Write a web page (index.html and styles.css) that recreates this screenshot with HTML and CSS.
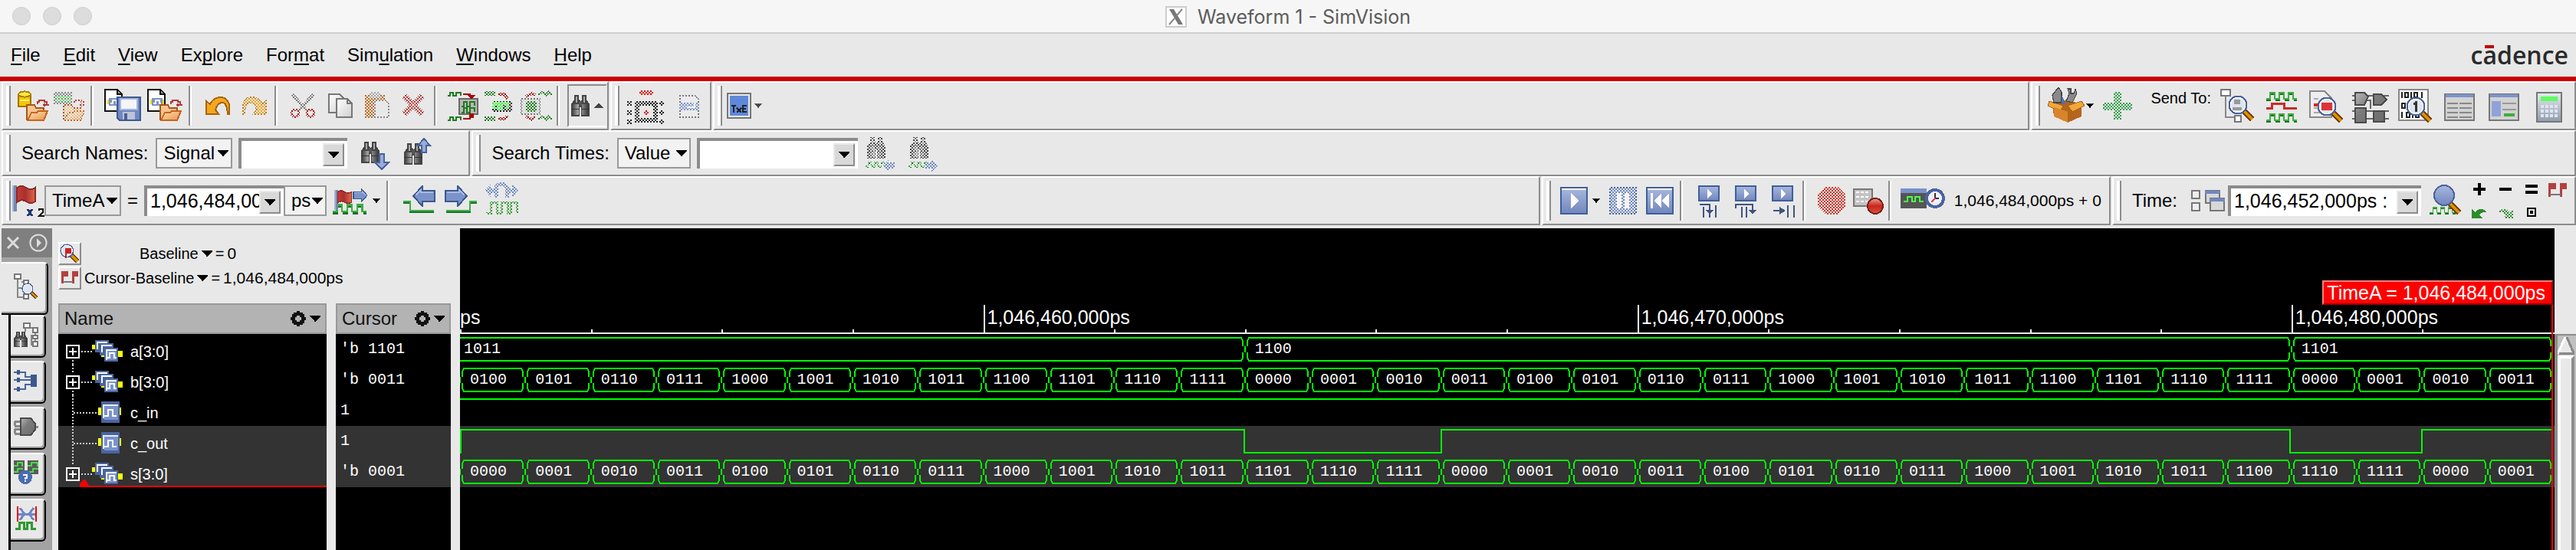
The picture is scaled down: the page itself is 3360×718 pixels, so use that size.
FILE: index.html
```html
<!DOCTYPE html>
<html lang="en">
<head>
<meta charset="utf-8">
<title>Waveform 1 - SimVision</title>
<link rel="stylesheet" href="styles.css">
</head>
<body>
<svg class="defs" aria-hidden="true">
  <defs>
    <linearGradient id="gb" x1="0" y1="0" x2="0" y2="1"><stop offset="0" stop-color="#a9b8de"/><stop offset="1" stop-color="#7186bd"/></linearGradient>
    <linearGradient id="gm" x1="0" y1="0" x2="1" y2="0"><stop offset="0" stop-color="#4a4a4a"/><stop offset=".4" stop-color="#b0b0b0"/><stop offset="1" stop-color="#3c3c3c"/></linearGradient>
    <linearGradient id="gg" x1="0" y1="0" x2="1" y2="1"><stop offset="0" stop-color="#b8b8b8"/><stop offset=".4" stop-color="#7c7c7c"/><stop offset="1" stop-color="#6a6a6a"/></linearGradient>
    <linearGradient id="gf" x1="0" y1="0" x2="1" y2="1"><stop offset="0" stop-color="#ffe3b8"/><stop offset="1" stop-color="#e8924a"/></linearGradient>
    <linearGradient id="gr" x1="0" y1="0" x2="0" y2="1"><stop offset="0" stop-color="#e8a08c"/><stop offset=".5" stop-color="#c8251c"/><stop offset="1" stop-color="#d8553c"/></linearGradient>
    <linearGradient id="gl" x1="0" y1="0" x2="1" y2="0"><stop offset="0" stop-color="#c93b33"/><stop offset=".45" stop-color="#a82f30"/><stop offset="1" stop-color="#e0694a"/></linearGradient>
    <linearGradient id="gp" x1="0" y1="0" x2="1" y2="1"><stop offset="0" stop-color="#fff"/><stop offset="1" stop-color="#cfcfcf"/></linearGradient>
    <linearGradient id="gc" x1="0" y1="0" x2="0" y2="1"><stop offset="0" stop-color="#e6eaf0"/><stop offset="1" stop-color="#8f9cae"/></linearGradient>

    <symbol id="folder" viewBox="0 0 15 12"><path d="M.5 11.500V1.500H5.500L6.500 3.500H11.500V6" fill="#f6c48c" stroke="#a8541c"/><path d="M1 11.500L3.500 6.500H7L8 5.500H14L11.500 11.500Z" fill="url(#gf)" stroke="#c8641e"/></symbol>
    <symbol id="redarrow" viewBox="0 0 8 5"><path d="M.5 3V1.500H1.500V.5H5V1.500H6.500V4M4 3.500H8M5 2.500V4.500" fill="none" stroke="#b13a3a"/></symbol>
    <symbol id="page" viewBox="0 0 13 16"><path d="M.5.5H8.500L11.500 3.500V14.500H.5Z" fill="#fff" stroke="#111"/><path d="M8.500 1V3.500H11" fill="#999" stroke="#111"/><rect x="2" y="7" width="9" height="3" fill="#f5e000"/><rect x="3" y="6" width="7" height="5" fill="#7d92c8"/><path d="M4 9.500H5.500V7.500H8V9.500H9" fill="none" stroke="#fff"/></symbol>
    <symbol id="lens" viewBox="0 0 18 18"><path d="M10.500 10.500L16 16" stroke="#7a3d10" stroke-width="4"/><path d="M10.500 10.500L16 16" stroke="#d89500" stroke-width="2"/><circle cx="6.500" cy="6.500" r="5.700" fill="#dfe4ee" stroke="#48639c"/><circle cx="6.500" cy="6.500" r="4.800" fill="none" stroke="#fff" stroke-width=".8"/></symbol>
    <symbol id="binoc" viewBox="0 0 12 14"><path d="M2 0H5V3L6 4V14H0V6L2 3ZM7 0H10V3L12 6V14H6V4L7 3Z" fill="#444"/><path d="M1 6H5V13H1ZM7 6H11V13H7Z" fill="url(#gm)"/><path d="M3 1H4V5H3ZM8 1H9V5H8Z" fill="#aaa"/><path d="M5 4H7V7H5Z" fill="#555"/><path d="M0 9H5M7 9H12" stroke="#333" stroke-width=".5"/><path d="M5.500 8H6.500V14H5.500Z" fill="#e8e8e8"/></symbol>
    <symbol id="flag" viewBox="0 0 16 17"><rect width="3" height="17" fill="#7488b4"/><rect width="1" height="17" fill="#a6b4d4"/><path d="M3 1.500Q6-.5 9 1.500T15 1.500V10.500Q12 12.500 9 10.500T3 11Z" fill="url(#gl)" stroke="#8c2a2a"/></symbol>
    <symbol id="left" viewBox="0 0 15 14"><path d="M.5 7L6.500 .5V3.500H14.500V10.500H6.500V13.500Z" fill="#7b93cb" stroke="#3d588e"/><path d="M2 6.500L5.500 3V4.500H13.500" fill="none" stroke="#a9bae4"/></symbol>
    <symbol id="one" viewBox="0 0 17 14"><rect x="1" y="4" width="15" height="5" fill="#ff0"/><rect x="3" y="0" width="12" height="14" fill="#4a659f"/><rect x="4" y="2" width="10" height="9" fill="#e8eefb"/><rect x="5" y="3" width="9" height="9" fill="#7b93cb"/><path d="M5 9.500H7.500V5.500H10.500V9.500H13" fill="none" stroke="#fff"/></symbol>
    <symbol id="bus" viewBox="0 0 20 14"><path d="M0 3H2V6H0ZM3 6H5V8H3ZM6 8H8V11H6ZM17 7H20V11H17Z" fill="#ff0"/><path d="M2 0H11V8H2Z" fill="#4a659f"/><path d="M3 1H10V2H4V6H3Z" fill="#fff"/><path d="M5 2H14V10H5Z" fill="#4a659f"/><path d="M6 3H13V4H7V8H6Z" fill="#fff"/><path d="M8 5H17V14H8Z" fill="#4a659f"/><path d="M9 6H16V13H9Z" fill="#fff"/><path d="M10 7H16V13H10Z" fill="#7b93cb"/><path d="M10 11.500H11.500V8.500H14.500V11.500H16" fill="none" stroke="#fff"/></symbol>
    <symbol id="wave" viewBox="0 0 20 6"><path d="M0 4.500H2.500V.5H5.500V4.500H8.500V.5H11.500V4.500H14.500V.5H17.500V4.500H20" fill="none" stroke="#3fae3f"/><path d="M0 5.500H3M6 5.500H9M12 5.500H15M18 5.500H20M3 1.500H5M9 1.500H11M15 1.500H17" stroke="#17702a"/></symbol>
    <symbol id="flags2" viewBox="0 0 12 10"><path d="M0 0H5V4H1.500V9H0ZM7 0H12V4H9V9H7.500V0Z" fill="#b34040"/><path d="M1 7.500H8" stroke="#777"/></symbol>
    <symbol id="gear" viewBox="0 0 10 10"><path d="M4 0H6V1H8V2H9V4H10V6H9V8H8V9H6V10H4V9H2V8H1V6H0V4H1V2H2V1H4ZM4 3V4H3V6H4V7H6V6H7V4H6V3Z" fill="#111" fill-rule="evenodd"/></symbol>
    <symbol id="down" viewBox="0 0 14 8"><path d="M0 0H14V1L8 7V8H6V7L0 1Z"/></symbol>
    <symbol id="playbox" viewBox="0 0 14 11"><rect x=".5" y=".5" width="13" height="9.500" fill="url(#gb)" stroke="#3f5f9a"/><path d="M6 2.500L9.500 5.500L6 8.500Z" fill="#fff"/></symbol>
    <symbol id="plusbox" viewBox="0 0 9 9"><rect x=".5" y=".5" width="8" height="8" fill="none" stroke="#fff"/><path d="M2 4.500H7M4.500 2V7" stroke="#fff"/></symbol>
  </defs>
</svg>

<header class="titlebar">
  <div class="lights"><i></i><i></i><i></i></div>
  <h1 class="title">
    <svg class="xlogo" viewBox="0 0 28 28"><rect x="1" y="1" width="26" height="26" fill="#fff" stroke="#ccc" stroke-width="2"/><path d="M5 4H11L23 24H17Z" fill="#777"/><path d="M22 4L15 12M12 16L5 24" stroke="#888" stroke-width="2"/></svg>
    Waveform 1 - SimVision
  </h1>
</header>

<nav class="menubar">
  <button><u>F</u>ile</button><button><u>E</u>dit</button><button><u>V</u>iew</button><button>Ex<u>p</u>lore</button><button>For<u>m</u>at</button><button>Sim<u>u</u>lation</button><button><u>W</u>indows</button><button><u>H</u>elp</button>
  <span class="brand">c<span class="macron">a</span>dence</span>
</nav>

<div class="row row-main">
  <div class="bar">
    <i class="grip"></i>
    <button class="tool" aria-label="Open database"><svg class="ic" viewBox="0 0 24 24"><path d="M2 4.500V12.500H10V4.500Z" fill="#f0c800" stroke="#a87000" stroke-width="1"/><ellipse cx="6" cy="4.500" rx="4" ry="1.800" fill="#ffe94a" stroke="#b08000"/><path d="M3 8.500H9" stroke="#fff27a"/><use href="#folder" x="7" y="10" width="15" height="12"/><use href="#redarrow" x="14" y="8" width="8" height="5"/></svg></button>
    <button class="tool off" aria-label="Reload database" disabled><svg class="ic" viewBox="0 0 24 24"><rect x="1" y="3" width="12" height="8" fill="#888"/><path d="M2 6.500H12M2 8.500H12" stroke="#4cff4c" stroke-width="1"/><use href="#folder" x="7" y="10" width="15" height="12"/><use href="#redarrow" x="14" y="8" width="8" height="5"/></svg></button>
    <i class="sep"></i>
    <button class="tool wide" aria-label="Save session"><svg class="ic w28" viewBox="0 0 28 24"><use href="#page" x="2" y="1" width="13" height="16"/><path d="M10.500 6.500H25.500V21.500H12L10.500 20Z" fill="#6f87c4" stroke="#3d588e"/><rect x="12.500" y="7.500" width="11" height="7" fill="#f4f6fb" stroke="#a9b6dc"/><rect x="14" y="16" width="8" height="5" fill="#bcc3d4"/><rect x="15" y="17" width="2" height="4" fill="#4a5f94"/></svg></button>
    <button class="tool wide" aria-label="Open session"><svg class="ic w28" viewBox="0 0 28 24"><use href="#page" x="2" y="1" width="13" height="16"/><use href="#folder" x="10" y="10" width="15" height="12"/><use href="#redarrow" x="17" y="8" width="8" height="5"/></svg></button>
    <i class="sep"></i>
    <button class="tool" aria-label="Undo"><svg class="ic" viewBox="0 0 24 24"><path d="M4.500 9V17.500H12.500L10.500 14.500Q12 10 15 10Q18 10 18.500 17.500H19.500V11Q18 6.500 14 6.500Q9 6.500 7 11Z" fill="#f3a71d" stroke="#a8640a"/></svg></button>
    <button class="tool off" aria-label="Redo" disabled><svg class="ic" viewBox="0 0 24 24"><path d="M19.500 9V17.500H11.500L13.500 14.500Q12 10 9 10Q6 10 5.500 17.500H4.500V11Q6 6.500 10 6.500Q15 6.500 17 11Z" fill="#f3a71d" stroke="#c07810"/></svg></button>
    <i class="sep"></i>
    <button class="tool off" aria-label="Cut" disabled><svg class="ic" viewBox="0 0 24 24"><path d="M4.500 4.500L14 15M18.500 4.500L9 15" fill="none" stroke="#777" stroke-width="2"/><circle cx="6.500" cy="17" r="2.300" fill="none" stroke="#b01818" stroke-width="1.500"/><circle cx="16.500" cy="17" r="2.300" fill="none" stroke="#b01818" stroke-width="1.500"/></svg></button>
    <button class="tool" aria-label="Copy"><svg class="ic" viewBox="0 0 24 24"><path d="M4.500 4.500H11.500L14.500 7.500V16.500H4.500Z" fill="url(#gp)" stroke="#777"/><path d="M9.500 7.500H16.500L19.500 10.500V19.500H9.500Z" fill="url(#gp)" stroke="#777"/><path d="M16.500 7.500V10.500H19.500" fill="none" stroke="#777"/></svg></button>
    <button class="tool off" aria-label="Paste" disabled><svg class="ic" viewBox="0 0 24 24"><rect x="4" y="5" width="13" height="15" fill="#c06a1c"/><rect x="7" y="3" width="7" height="4" fill="#aaa"/><path d="M10.500 8.500H17L19.500 11V19.500H10.500Z" fill="#e8e8e8" stroke="#888"/></svg></button>
    <button class="tool off" aria-label="Delete" disabled><svg class="ic" viewBox="0 0 24 24"><path d="M5.500 5.500L17.500 17.500M17.500 5.500L5.500 17.500" stroke="#a83232" stroke-width="4"/><path d="M5.500 5.500L17.500 17.500M17.500 5.500L5.500 17.500" stroke="#e07060" stroke-width="1"/></svg></button>
    <i class="sep"></i>
    <button class="tool" aria-label="Send waves in and out"><svg class="ic" viewBox="0 0 24 24"><path d="M2 5.500H3.500V3.500H5.500V5.500H7.500V3.500H10.500V5.500M2 21.500H3.500V19.500H5.500V21.500H7.500V19.500H10.500V21.500" fill="none" stroke="#1d7c1d"/><rect x="9.500" y="7.500" width="12" height="10" fill="#b8b8b8" stroke="#6a6a6a"/><path d="M11 12.500H12.500V9.500H14.500V12.500H16.500V9.500H19.500V12M11 16.500H12.500V13.500H14.500V16.500H16.500V13.500H19.500V16" fill="none" stroke="#1d7c1d"/><path d="M12 4.500H16.500V6M12 20.500H16.500V19" fill="none" stroke="#a80000"/><path d="M15 5H20L17.500 8ZM16 17H19V20H16Z" fill="#a80000"/></svg></button>
    <button class="tool off" aria-label="Add waves" disabled><svg class="ic" viewBox="0 0 24 24"><path d="M2 4H9M2 20.500H9" stroke="#1d7c1d" stroke-width="3"/><rect x="7" y="9" width="13" height="7" fill="#222"/><path d="M8 14V10.500H11V14H13V10.500H17V14" fill="none" stroke="#3cff3c" stroke-width="2"/><path d="M11 4.500H15L17 7.500M11 20.500H15L17 18.500" fill="none" stroke="#a80000" stroke-width="2"/></svg></button>
    <button class="tool off" aria-label="Extract waves" disabled><svg class="ic" viewBox="0 0 24 24"><rect x="2" y="7.500" width="12" height="10" fill="#d4d4d4" stroke="#777"/><path d="M5 9H12V16H5Z" fill="#1d7c1d"/><path d="M5 6L9 4L11 5M5 19L9 21L11 19" stroke="#a80000" stroke-width="2" fill="none"/><path d="M13 5L16 3L18 5L20 3L22 5M13 21L16 19L18 21L20 19L22 21" stroke="#1d7c1d" stroke-width="1.500" fill="none"/></svg></button>
    <i class="sep"></i>
    <button class="tool sunk" aria-label="Show search bar"><svg class="b-l" viewBox="0 0 12 14"><use href="#binoc" width="12" height="14"/></svg><svg class="tri up" viewBox="0 0 14 8"><use href="#down" width="14" height="8"/></svg></button>
  </div>
  <div class="bar roomy">
    <i class="grip"></i>
    <button class="tool wide off" aria-label="Breakpoint" disabled><svg class="ic w28" viewBox="0 0 28 24"><path d="M8 3.500H17" stroke="#e00000" stroke-width="3"/><rect x="6.500" y="10.500" width="12" height="11" fill="none" stroke="#222" stroke-width="3"/><path d="M0 10.500H3M0 16.500H3M0 22.500H3M21 10.500H24M21 16.500H24M21 22.500H24" stroke="#222" stroke-width="3"/><rect x="11" y="15" width="3" height="3" fill="#e00000"/></svg></button>
    <button class="tool off" aria-label="Page" disabled><svg class="ic" viewBox="0 0 24 24"><path d="M4.500 5.500H14L16.500 8V19.500H4.500Z" fill="#eee" stroke="#777"/><path d="M4 10H17V15H4Z" fill="#7b93cb"/><path d="M9 13H14V10" stroke="#fff" fill="none"/></svg></button>
  </div>
  <div class="bar grow">
    <i class="grip"></i>
    <button class="tool flat text" aria-label="Text editor"><svg class="txe" viewBox="0 0 16 17"><rect x=".5" y=".5" width="15" height="16" fill="#5f88da" stroke="#777"/><rect x="1.500" y="1.500" width="13" height="14" fill="none" stroke="#e8e8e8"/><path d="M3 8.500H6M4.500 8.500V13M6.500 10L9.500 13M9.500 10L6.500 13M13 8.500H10.500V12.500H13M10.500 10.500H12.500" fill="none" stroke="#222"/></svg><svg class="tri sm grey" viewBox="0 0 14 8"><use href="#down" width="14" height="8"/></svg></button>
  </div>
  <div class="bar send">
    <i class="grip"></i>
    <button class="tool flat box" aria-label="Toolbox"><svg class="ic" viewBox="0 0 24 24"><path d="M3 11L12 8L22 11V19L13 23L4 19Z" fill="#b5651b"/><path d="M1 9L10 12L8 16L0 12ZM22 9L13 12L16 16L24 12Z" fill="#f0a838" stroke="#a8641a" stroke-width=".5"/><path d="M4 10L3 5L7 0L9 3V10ZM12 9L14 4L13 1H15V4H17L18 1L19 4L16 10Z" fill="#8a8a8a" stroke="#444" stroke-width=".6"/><path d="M9 5L12 11H9Z" fill="#4f6fb0"/><path d="M4 13L13 16V23L4 19Z" fill="#d8852a"/></svg><svg class="tri sm" viewBox="0 0 14 8"><use href="#down" width="14" height="8"/></svg></button>
    <button class="tool off" aria-label="Add" disabled><svg class="ic" viewBox="0 0 24 24"><path d="M9 3H14V10H21V15H14V21H9V15H2V10H9Z" fill="#2f9e4a"/></svg></button>
    <span class="sendto">Send To:</span>
    <div class="sends">
      <button class="tool" aria-label="Design browser"><svg class="ic" viewBox="0 0 24 24"><path d="M4.500 4V19.500H10" fill="none" stroke="#888"/><rect x="1.500" y="1.500" width="6" height="4" fill="#fff" stroke="#777"/><rect x="10.500" y="18.500" width="4" height="4" fill="#fff" stroke="#777"/><use href="#lens" x="6" y="5" width="18" height="18"/><path d="M10 8H14V11H10ZM9 13H15V15H9Z" fill="#999"/></svg></button>
      <button class="tool" aria-label="Waveform"><svg class="ic" viewBox="0 0 24 24"><use href="#wave" x="2" y="3" width="20" height="6"/><path d="M2 13.500H5.500V10.500H13.500V13.500H22" fill="none" stroke="#cc2a2a" stroke-width="1.500"/><use href="#wave" x="2" y="17" width="20" height="6"/></svg></button>
      <button class="tool" aria-label="Source browser"><svg class="ic" viewBox="0 0 24 24"><path d="M1.500 2.500H11L15.500 7V19.500H1.500Z" fill="#eee" stroke="#888"/><path d="M4 7.500H7M4 13.500H7M4 16.500H12" stroke="#aaa"/><path d="M4 11.500H7" stroke="#d22" stroke-width="2"/><use href="#lens" x="6" y="6" width="18" height="18"/><rect x="9" y="10" width="7" height="5" fill="#d33"/></svg></button>
      <button class="tool" aria-label="Schematic"><svg class="ic" viewBox="0 0 24 24"><path d="M0 5.500H24M0 8.500H12M12 8V14M0 15.500H24M0 20.500H24" stroke="#666"/><path d="M2 3.500H8L10.500 6L8 11.500H2ZM14 4.500H19L22.500 8L19 11.500H14ZM2 13.500H9V23H2ZM14 15.500H21V22.500H14Z" fill="url(#gg)" stroke="#4a4a4a"/></svg></button>
      <button class="tool" aria-label="Memory viewer"><svg class="ic" viewBox="0 0 24 24"><rect x="1.500" y="1.500" width="19" height="20" fill="#fff" stroke="#888"/><path d="M3.500 3V7M5.500 3.500H7.500V6.500H5.500ZM9.500 3V7M11.500 3.500H13.500V6.500H11.500ZM16.500 3V7M3.500 10.500H5.500V13.500H3.500ZM3.500 16V20M6.500 16.500H8.500V19.500H6.500ZM10.500 16V20M12.500 16.500H14.500V19.500H12.500Z" stroke="#222" fill="none"/><use href="#lens" x="6" y="6" width="18" height="18"/><path d="M12.500 9V16M11 10.500H12.500" stroke="#333" stroke-width="1.500"/></svg></button>
      <button class="tool" aria-label="Register"><svg class="ic" viewBox="0 0 24 24"><rect x="2.500" y="4.500" width="19" height="17" fill="#d2d2d2" stroke="#777"/><path d="M3 5.500H21" stroke="#7b93cb" stroke-width="2"/><path d="M4 10.500H11M4 13.500H11M4 16.500H11M4 19.500H11M12 10.500H20M12 13.500H20M12 16.500H20M12 19.500H20" stroke="#888"/></svg></button>
      <button class="tool" aria-label="Properties"><svg class="ic" viewBox="0 0 24 24"><rect x="2.500" y="4.500" width="19" height="17" fill="#d2d2d2" stroke="#777"/><path d="M3 5.500H21" stroke="#7b93cb" stroke-width="2"/><rect x="4" y="9" width="6" height="10" fill="#8fa3d8"/><path d="M11 10.500H20M11 14.500H20" stroke="#999"/><path d="M12 18H19" stroke="#3fae3f" stroke-width="2"/></svg></button>
      <button class="tool" aria-label="Calculator"><svg class="ic" viewBox="0 0 24 24"><rect x="4.500" y="3.500" width="16" height="19" fill="url(#gc)" stroke="#777"/><rect x="7" y="6" width="11" height="3" fill="#5cff5c"/><path d="M7 12.500H18M7 15.500H18M7 18.500H18" stroke="#dfe5ee" stroke-width="2" stroke-dasharray="2 1"/></svg></button>
    </div>
  </div>
</div>

<div class="row row-search">
  <div class="bar">
    <i class="grip"></i>
    <label class="lab" for="sn">Search Names:</label>
    <select class="sel" aria-label="Name kind"><option>Signal</option></select>
    <div class="combo c-s"><input id="sn" type="text"><button aria-label="Open list"><svg class="tri" viewBox="0 0 14 8"><use href="#down" width="14" height="8"/></svg></button></div>
    <button class="tool wide" aria-label="Find next"><svg class="ic w28" viewBox="0 0 28 24"><use href="#binoc" x="4" y="4" width="12" height="15"/><path d="M16 12.500H19V18H22L17.500 22.500L13 18H16Z" fill="#9aacd8" stroke="#48639c"/></svg></button>
    <button class="tool wide last" aria-label="Find previous"><svg class="ic w28" viewBox="0 0 28 24"><use href="#binoc" x="4" y="5" width="12" height="15"/><path d="M15.500 11.500H18.500V7H21L17 2.500L13 7H15.500Z" fill="#9aacd8" stroke="#48639c"/></svg></button>
  </div>
  <div class="bar grow">
    <i class="grip"></i>
    <label class="lab" for="st">Search Times:</label>
    <select class="sel val" aria-label="Time kind"><option>Value</option></select>
    <div class="combo c-t"><input id="st" type="text"><button aria-label="Open list"><svg class="tri" viewBox="0 0 14 8"><use href="#down" width="14" height="8"/></svg></button></div>
    <button class="tool wide off" aria-label="Previous match" disabled><svg class="ic w28" viewBox="0 0 28 24"><use href="#binoc" x="4" y="1" width="12" height="15"/><use href="#wave" x="3" y="17" width="14" height="5"/><path d="M14 20L18 16V18H22V22H18V24Z" fill="#6f87c4"/></svg></button>
    <button class="tool wide off" aria-label="Next match" disabled><svg class="ic w28" viewBox="0 0 28 24"><use href="#binoc" x="4" y="1" width="12" height="15"/><use href="#wave" x="3" y="17" width="14" height="5"/><path d="M22 20L18 16V18H14V22H18V24Z" fill="#6f87c4"/></svg></button>
  </div>
</div>

<div class="row row-time">
  <div class="bar grow">
    <i class="grip tight"></i>
    <svg class="flagx" viewBox="0 0 21 24"><use href="#flag" x="0" y="2" width="16" height="17"/><path d="M10 17.500L13 22M13 17.500L10 22" stroke="#1f3a75" stroke-width="1.500"/><path d="M17.500 18.500V17.500H20V19.500L17.500 22H21" stroke="#111" fill="none"/></svg>
    <select class="sel" aria-label="Cursor"><option>TimeA</option></select>
    <label class="eq" for="ta">=</label>
    <div class="combo c-a"><input id="ta" type="text" value="1,046,484,000"><button aria-label="Open list"><svg class="tri" viewBox="0 0 14 8"><use href="#down" width="14" height="8"/></svg></button></div>
    <select class="sel ps" aria-label="Unit"><option>ps</option></select>
    <button class="tool flat" aria-label="Go to cursor"><svg class="ic" viewBox="0 0 24 24"><use href="#wave" x="1" y="14" width="22" height="7"/><use href="#flag" x="2" y="4" width="12" height="15"/><g transform="translate(24 4) scale(-1 1)"><use href="#left" x="0" y="0" width="10" height="9"/></g></svg><svg class="tri sm" viewBox="0 0 14 8"><use href="#down" width="14" height="8"/></svg></button>
    <i class="sep"></i>
    <button class="tool wide" aria-label="Previous edge"><svg class="ic w28" viewBox="0 0 28 24"><use href="#left" x="10" y="2" width="15" height="14"/><path d="M4 12.500H8.500V18.500H24" fill="none" stroke="#3fae3f"/><path d="M4 13.500H8M8 19.500H24" stroke="#17702a"/></svg></button>
    <button class="tool wide" aria-label="Next edge"><svg class="ic w28" viewBox="0 0 28 24"><g transform="translate(28 0) scale(-1 1)"><use href="#left" x="10" y="2" width="15" height="14"/><path d="M4 12.500H8.500V18.500H24" fill="none" stroke="#3fae3f"/><path d="M4 13.500H8M8 19.500H24" stroke="#17702a"/></g></svg></button>
    <button class="tool off" aria-label="Any edge" disabled><svg class="ic" viewBox="0 0 24 24"><path d="M1 5L5 1V4H8V7H5V10ZM23 5L19 1V4H16V7H19V10Z" fill="#6f87c4"/><path d="M8.500 10V3Q12-1 15.500 3V10" fill="none" stroke="#6f87c4" stroke-width="2.500"/><path d="M2 20H5V13H9V20H12V13H16V20H18V13H22V20" fill="none" stroke="#2d9a2d" stroke-width="1.500"/></svg></button>
  </div>
  <div class="bar">
    <i class="grip"></i>
    <button class="tool flat" aria-label="Run"><svg class="sq" viewBox="0 0 18 18"><rect x=".5" y=".5" width="17" height="17" fill="url(#gb)" stroke="#3f5f9a"/><path d="M1 1.500H17" stroke="#fff"/><path d="M7 4L12 9L7 14Z" fill="#fff"/></svg><svg class="tri sm" viewBox="0 0 14 8"><use href="#down" width="14" height="8"/></svg></button>
    <button class="tool off" aria-label="Stop" disabled><svg class="sq" viewBox="0 0 18 18"><rect x=".5" y=".5" width="17" height="17" fill="#6f87c4" stroke="#3f5f9a"/><path d="M6.500 4V14M11.500 4V14" stroke="#fff" stroke-width="3"/></svg></button>
    <button class="tool" aria-label="Rewind"><svg class="sq" viewBox="0 0 18 18"><rect x=".5" y=".5" width="17" height="17" fill="url(#gb)" stroke="#3f5f9a"/><path d="M1 1.500H17" stroke="#fff"/><path d="M3 4H4.500V14H3ZM10 4V14L5 9ZM15 4V14L10 9Z" fill="#fff"/></svg></button>
    <i class="sep"></i>
    <button class="tool" aria-label="Step into"><svg class="ic" viewBox="0 0 24 24"><use href="#playbox" x="4" y="2" width="16" height="11"/><path d="M6 14.500H12.500V18M16.500 15V23M8.500 16V23" fill="none" stroke="#3f5480"/><path d="M10 18H15L12.500 21Z" fill="#3f5480"/><path d="M12.500 20V23" stroke="#3f5480"/></svg></button>
    <button class="tool" aria-label="Step over"><svg class="ic" viewBox="0 0 24 24"><use href="#playbox" x="4" y="2" width="16" height="11"/><path d="M5.500 17V14.500H16.500V18M9.500 16V23M12.500 16V23" fill="none" stroke="#3f5480"/><path d="M14 18H19L16.500 21Z" fill="#3f5480"/></svg></button>
    <button class="tool" aria-label="Step out"><svg class="ic" viewBox="0 0 24 24"><use href="#playbox" x="4" y="2" width="16" height="11"/><path d="M6 18.500H11M15.500 15V23M19.500 15V23" fill="none" stroke="#3f5480"/><path d="M10 16V21L14 18.500Z" fill="#3f5480"/></svg></button>
    <i class="sep"></i>
    <button class="tool off" aria-label="Interrupt" disabled><svg class="sq" viewBox="0 0 18 18"><path d="M5 0H13L18 5V13L13 18H5L0 13V5Z" fill="#c8352a"/></svg></button>
    <button class="tool" aria-label="Record"><svg class="ic" viewBox="0 0 24 24"><rect x="2.500" y="4.500" width="12" height="11" fill="#c4c4c4" stroke="#777"/><path d="M5 6V15M8 6V15M11 6V15" stroke="#fff" stroke-dasharray="1 2" stroke-width="2"/><circle cx="16.500" cy="15.500" r="5" fill="url(#gr)" stroke="#7c1c16"/></svg></button>
    <i class="sep"></i>
    <svg class="clock" viewBox="0 0 30 24"><rect x="1" y="4" width="17" height="13" fill="#555"/><path d="M1 5.500H18" stroke="#7b93cb" stroke-width="3"/><path d="M3 12.500H5.500V9.500H8.500V12.500H10.500V9.500H13.500V12.500H16" fill="none" stroke="#4cff4c"/><circle cx="23.500" cy="10.500" r="5.500" fill="#eef" stroke="#4a659f" stroke-width="2"/><path d="M23.500 7V10.500H26" stroke="#333" fill="none"/><path d="M21 13L23.500 10.500" stroke="#d44"/></svg>
    <output class="num">1,046,484,000ps + 0</output>
  </div>
  <div class="bar">
    <i class="grip"></i>
    <label class="lab tm" for="tr">Time:</label>
    <svg class="ranges" viewBox="0 0 24 16"><rect x="2.500" y="1.500" width="5" height="5" fill="#eee" stroke="#777"/><rect x="2.500" y="9.500" width="5" height="5" fill="#eee" stroke="#777"/><rect x="11.500" y="1.500" width="9" height="8" fill="#d8d8d8" stroke="#777"/><path d="M11 2.500H21" stroke="#6f87c4" stroke-width="2"/><rect x="14.500" y="6.500" width="9" height="8" fill="#d8d8d8" stroke="#777"/><path d="M14 7.500H24" stroke="#6f87c4" stroke-width="2"/></svg>
    <div class="combo c-r"><input id="tr" type="text" value="1,046,452,000ps :"><button aria-label="Open list"><svg class="tri" viewBox="0 0 14 8"><use href="#down" width="14" height="8"/></svg></button></div>
    <button class="tool" aria-label="Zoom"><svg class="ic" viewBox="0 0 24 24"><use href="#wave" x="1" y="16" width="18" height="5"/><path d="M15 14L21 20" stroke="#7a3d10" stroke-width="4"/><path d="M15 14L21 20" stroke="#d89500" stroke-width="2"/><circle cx="11" cy="8.500" r="6.500" fill="url(#gb)" stroke="#48639c"/></svg></button>
    <div class="zoomgrid">
      <button aria-label="Zoom in"><svg viewBox="0 0 12 12"><path d="M2 6H10M6 2V10" stroke="#000" stroke-width="2"/></svg></button>
      <button aria-label="Zoom out"><svg viewBox="0 0 12 12"><path d="M2 6H10" stroke="#000" stroke-width="2"/></svg></button>
      <button aria-label="Zoom fit"><svg viewBox="0 0 12 12"><path d="M2 4H10M2 8H10" stroke="#000" stroke-width="2"/></svg></button>
      <button aria-label="Zoom cursors"><svg viewBox="0 0 12 12"><use href="#flags2" y="2" width="12" height="10"/></svg></button>
      <button aria-label="Previous view"><svg viewBox="0 0 12 12"><path d="M1 4L3 6Q7 2 11 6Q8 5 6 8L8 10H1Z" fill="#2b8c2b"/></svg></button>
      <button class="off" aria-label="Next view" disabled><svg viewBox="0 0 12 12"><path d="M11 4L9 6Q5 2 1 6Q4 5 6 8L5 10H11Z" fill="#2b8c2b"/></svg></button>
      <button aria-label="Centre view"><svg viewBox="0 0 12 12"><rect x="3.500" y="3.500" width="5" height="5" fill="none" stroke="#000"/><rect x="5" y="5" width="2" height="2"/></svg></button>
    </div>
  </div>
</div>

<main class="work">
  <aside class="side">
    <div class="side-head">
      <button aria-label="Close"><svg viewBox="0 0 8 8"><path d="M.5.5L7.500 7.500M7.500.5L.5 7.500" stroke="#ddd" stroke-width="1.500"/></svg></button>
      <button aria-label="Expand"><svg class="ring" viewBox="0 0 12 12"><circle cx="6" cy="6" r="5.300" fill="none" stroke="#ddd"/><path d="M5 3V9L8 6Z" fill="#ddd"/></svg></button>
    </div>
    <button class="tab on" aria-label="Design tree"><svg viewBox="0 0 16 18"><path d="M2.500 3V15.500H8M2.500 9.500H8M5 5.500H7" fill="none" stroke="#888"/><rect x=".5" y=".5" width="4" height="3" fill="#fff" stroke="#777"/><rect x="6.500" y="4.500" width="3" height="3" fill="#fff" stroke="#777"/><rect x="6.500" y="13.500" width="3" height="3" fill="#fff" stroke="#777"/><use href="#lens" x="5" y="5" width="11" height="13"/></svg></button>
    <button class="tab" aria-label="Find"><svg viewBox="0 0 16 16"><path d="M7.500 3V6M8 3.500H14V15M11.500 8V15M11 9.500H15" stroke="#888" fill="none"/><rect x="6.500" y=".5" width="4" height="3" fill="#fff" stroke="#777"/><path d="M12.500 3.500H15.500V6.500H12.500ZM12.500 8.500H15.500V10.500H12.500ZM12.500 12.500H15.500V15.500H12.500Z" fill="#fff" stroke="#777"/><use href="#binoc" x="0" y="6" width="9" height="10"/></svg></button>
    <button class="tab" aria-label="Drivers"><svg viewBox="0 0 16 16"><path d="M0 2.500H7.500V5.500H12M0 7.500H12M0 13.500H7.500V10.500H12" fill="none" stroke="#4a659f"/><path d="M4 1H2V4H4ZM4 6H2V9H4ZM4 12H2V15H4ZM11 4H15V12H11Z" fill="#3d588e"/></svg></button>
    <button class="tab" aria-label="Gate"><svg viewBox="0 0 16 16"><path d="M.5 4.500H5M.5 7.500H5M.5 4.500V7.500M.5 9.500H5M.5 12.500H5M.5 9.500V12.500M13 8H16" fill="none" stroke="#888" stroke-width="1.500"/><path d="M4.500 2.500H11L14 6V10L11 13.500H4.500Z" fill="url(#gg)" stroke="#4a4a4a"/></svg></button>
    <button class="tab" aria-label="Compare"><svg viewBox="0 0 16 16"><path d="M0 0H7V9H0ZM9 0H16V9H9Z" fill="#5a5a5a"/><path d="M0 3.500H2.500V1.500H5.500V4M0 7.500H2.500V5.500H6M9 3.500H11.500V1.500H15.500V4M10 7.500H12.500V5.500H16" stroke="#4cd84c" fill="none"/><circle cx="7.500" cy="11" r="4.500" fill="#4a6cb0"/><path d="M6 9.500H8.500V11.500H7.500V12.500M7.500 13V14" stroke="#fff" fill="none"/></svg></button>
    <button class="tab" aria-label="Measure"><svg viewBox="0 0 16 16"><path d="M2.500 0V10M14.500 0V10" stroke="#e00"/><path d="M4 1L7 5L4 9M13 1L10 5L13 9M3 5H14" stroke="#6f87c4" fill="none" stroke-width="1.500"/><path d="M1 14.500H3.500V10.500H6.500V14.500H8.500V10.500H11.500V14.500H14.500" stroke="#2d9a2d" stroke-width="1.500" fill="none"/></svg></button>
  </aside>

  <section class="left">
    <div class="info">
      <button class="mini" aria-label="Find baseline"><svg viewBox="0 0 14 14"><use href="#lens" x="0" y="0" width="14" height="14"/><path d="M4 3H8V7H5V10H4Z" fill="#c22"/></svg></button>
      <div class="info-text r1"><button class="dd">Baseline<svg class="tri" viewBox="0 0 14 8"><use href="#down" width="14" height="8"/></svg></button>= <span class="num">0</span></div>
      <button class="mini" aria-label="Cursor to baseline"><svg viewBox="0 0 14 14"><use href="#flags2" x="1" y="2" width="12" height="10"/></svg></button>
      <div class="info-text"><button class="dd">Cursor-Baseline<svg class="tri" viewBox="0 0 14 8"><use href="#down" width="14" height="8"/></svg></button>= <span class="num">1,046,484,000ps</span></div>
    </div>
    <div class="panels">
      <div class="panel names">
        <div class="head"><span>Name</span><button class="opts" aria-label="Name options"><svg class="gear" viewBox="0 0 10 10"><use href="#gear" width="10" height="10"/></svg><svg class="tri" viewBox="0 0 14 8"><use href="#down" width="14" height="8"/></svg></button></div>
        <ul class="tree">
          <li><svg class="branch" viewBox="0 0 22 20"><use href="#plusbox" x="5" y="7" width="9" height="9"/><path d="M9.500 17V20M15 11.500H22" stroke="#ccc" stroke-dasharray="1 1"/></svg><svg class="sig" viewBox="0 0 20 14"><use href="#bus" width="20" height="14"/></svg>a[3:0]</li>
          <li><svg class="branch" viewBox="0 0 22 20"><path d="M9.500 0V6M9.500 17V20M15 11.500H22" stroke="#ccc" stroke-dasharray="1 1"/><use href="#plusbox" x="5" y="7" width="9" height="9"/></svg><svg class="sig" viewBox="0 0 20 14"><use href="#bus" width="20" height="14"/></svg>b[3:0]</li>
          <li><svg class="branch" viewBox="0 0 22 20"><path d="M9.500 0V20M10 11.500H22" stroke="#ccc" stroke-dasharray="1 1"/></svg><svg class="sig" viewBox="0 0 20 14"><path d="M0 7.500H3" stroke="#ccc" stroke-dasharray="1 1"/><use href="#one" x="3" width="17" height="14"/></svg>c_in</li>
          <li class="lit"><svg class="branch" viewBox="0 0 22 20"><path d="M9.500 0V20M10 11.500H22" stroke="#ccc" stroke-dasharray="1 1"/></svg><svg class="sig" viewBox="0 0 20 14"><path d="M0 7.500H3" stroke="#ccc" stroke-dasharray="1 1"/><use href="#one" x="3" width="17" height="14"/></svg>c_out</li>
          <li class="lit insert"><svg class="branch" viewBox="0 0 22 20"><path d="M9.500 0V6M15 11.500H22" stroke="#ccc" stroke-dasharray="1 1"/><use href="#plusbox" x="5" y="7" width="9" height="9"/></svg><svg class="sig" viewBox="0 0 20 14"><use href="#bus" width="20" height="14"/></svg>s[3:0]</li>
        </ul>
      </div>
      <div class="panel values">
        <div class="head"><span>Cursor</span><button class="opts" aria-label="Cursor options"><svg class="gear" viewBox="0 0 10 10"><use href="#gear" width="10" height="10"/></svg><svg class="tri" viewBox="0 0 14 8"><use href="#down" width="14" height="8"/></svg></button></div>
        <ul class="vals"><li>'b 1101</li><li>'b 0011</li><li>1</li><li class="lit">1</li><li class="lit">'b 0001</li></ul>
      </div>
    </div>
  </section>

  <section class="wave">
    <div class="flagrow"><span class="tag">TimeA = 1,046,484,000ps</span></div>
    <div class="ruler">
      <i>ps</i><i></i><i></i><i></i><i class="major">1,046,460,000ps</i><i></i><i></i><i></i><i></i><i class="major">1,046,470,000ps</i><i></i><i></i><i></i><i></i><i class="major">1,046,480,000ps</i><i></i>
    </div>
    <div class="trace"><b class="v n12 open">1011</b><b class="v n16">1100</b><b class="v n4">1101</b></div>
    <div class="trace"><b class="v">0100</b><b class="v">0101</b><b class="v">0110</b><b class="v">0111</b><b class="v">1000</b><b class="v">1001</b><b class="v">1010</b><b class="v">1011</b><b class="v">1100</b><b class="v">1101</b><b class="v">1110</b><b class="v">1111</b><b class="v">0000</b><b class="v">0001</b><b class="v">0010</b><b class="v">0011</b><b class="v">0100</b><b class="v">0101</b><b class="v">0110</b><b class="v">0111</b><b class="v">1000</b><b class="v">1001</b><b class="v">1010</b><b class="v">1011</b><b class="v">1100</b><b class="v">1101</b><b class="v">1110</b><b class="v">1111</b><b class="v">0000</b><b class="v">0001</b><b class="v">0010</b><b class="v">0011</b></div>
    <div class="trace"><i class="hi"></i></div>
    <div class="trace lit"><i class="hi start n12"></i><i class="lo n3"></i><i class="hi n13"></i><i class="lo n2"></i><i class="hi n2"></i></div>
    <div class="trace lit"><b class="v">0000</b><b class="v">0001</b><b class="v">0010</b><b class="v">0011</b><b class="v">0100</b><b class="v">0101</b><b class="v">0110</b><b class="v">0111</b><b class="v">1000</b><b class="v">1001</b><b class="v">1010</b><b class="v">1011</b><b class="v">1101</b><b class="v">1110</b><b class="v">1111</b><b class="v">0000</b><b class="v">0001</b><b class="v">0010</b><b class="v">0011</b><b class="v">0100</b><b class="v">0101</b><b class="v">0110</b><b class="v">0111</b><b class="v">1000</b><b class="v">1001</b><b class="v">1010</b><b class="v">1011</b><b class="v">1100</b><b class="v">1110</b><b class="v">1111</b><b class="v">0000</b><b class="v">0001</b></div>
    <div class="cursorline"></div>
  </section>

  <div class="scroll">
    <div class="scrollbar">
      <button aria-label="Scroll up"><svg viewBox="0 0 11 12"><path d="M0 0H11V12H0Z" fill="#c0c0c0"/><path d="M5.500 0L11 11H0Z" fill="#e8e8e8"/><path d="M5 0L0 11" stroke="#fff" stroke-width="1.500"/><path d="M6 0L10.500 10.500H1" fill="none" stroke="#888" stroke-width="1.500"/></svg></button>
      <div class="thumb"></div>
    </div>
  </div>
</main>
</body>
</html>
```
FILE: styles.css
```css
* { box-sizing: border-box; }
:root {
  --bg: #e8e8e8;
  --shade: #8c8c8c;
  --green: #00ff00;
  --lit: #333333;
}
body {
  margin: 0;
  min-height: 100vh;
  display: flex;
  flex-direction: column;
  background: var(--bg);
  color: #000;
  font: 24px/28px "Liberation Sans", Arial, sans-serif;
}
button, input, select {
  margin: 0;
  padding: 0;
  border: 0;
  border-radius: 0;
  background: none;
  color: inherit;
  font: inherit;
}
svg { display: block; flex: none; shape-rendering: crispEdges; }
ul { margin: 0; padding: 0; list-style: none; }
.defs { position: absolute; width: 0; height: 0; }

/* window title */
.titlebar {
  display: grid;
  grid-template-columns: 1fr auto 1fr;
  align-items: center;
  height: 44px;
  padding: 0 16px;
  background: #f6f6f6;
  border-bottom: 2px solid #d0d0d0;
}
.lights { display: flex; gap: 16px; }
.lights i {
  width: 24px;
  height: 24px;
  border: 1px solid #cdcdcd;
  border-radius: 50%;
  background: #dcdcdc;
}
.title {
  display: flex;
  align-items: center;
  gap: 14px;
  margin: 0;
  padding-top: 2px;
  color: #5c5c5c;
  font: 400 25px/28px Inter, "Liberation Sans", sans-serif;
}
.xlogo { width: 28px; height: 28px; shape-rendering: auto; }

/* menus */
.menubar {
  display: flex;
  align-items: center;
  gap: 30px;
  height: 62px;
  padding: 0 10px 0 14px;
  border-bottom: 6px solid #cc0000;
}
.menubar u { text-decoration-thickness: 2px; text-underline-offset: 3px; text-decoration-skip-ink: none; }
.brand {
  margin-left: auto;
  color: #2a2a2a;
  font: 600 32px/32px "Open Sans", sans-serif;
}
.macron { position: relative; }
.macron::before {
  content: "";
  position: absolute;
  top: 9px;
  left: 3px;
  width: 12px;
  height: 4px;
  background: #c00000;
}

/* toolbars */
.row { display: flex; padding-left: 2px; gap: 2px; }
.row-main, .row-time { height: 64px; }
.row-search { height: 60px; }
.bar {
  display: flex;
  align-items: center;
  padding-left: 4px;
  border: 2px solid;
  border-color: #fff var(--shade) var(--shade) #fff;
}
.bar.grow { flex: 1; }
.bar.roomy .tool { margin-left: 4px; }
.grip {
  align-self: stretch;
  width: 6px;
  margin: 4px 6px 4px 0;
  border-left: 4px solid #fff;
  border-right: 2px solid var(--shade);
}
.grip.tight { margin-right: 2px; }
.sep {
  align-self: stretch;
  width: 4px;
  margin: 4px 10px 4px 2px;
  border-left: 2px solid var(--shade);
  border-right: 2px solid #fff;
}
.tool {
  display: flex;
  align-items: center;
  justify-content: center;
  width: 48px;
  height: 48px;
}
.tool.wide { width: 56px; }
.tool.flat { width: auto; padding: 0 6px; gap: 6px; }
.tool.text { padding: 0; gap: 4px; }
.tool.box { padding: 0 8px 0 4px; gap: 2px; }
.tool.last { margin-right: 36px; }
.ic { width: 48px; height: 48px; }
.ic.w28 { width: 56px; }
.off svg {
  -webkit-mask: repeating-conic-gradient(#000 0 25%, transparent 0 50%) 0 0 / 4px 4px;
  mask: repeating-conic-gradient(#000 0 25%, transparent 0 50%) 0 0 / 4px 4px;
}
.sunk {
  width: 52px;
  height: 56px;
  gap: 6px;
  border: 2px solid;
  border-color: var(--shade) var(--bg) #fff var(--shade);
}
.b-l { width: 24px; height: 28px; }
.tri { width: 14px; height: 8px; }
.tri.sm { width: 10px; height: 6px; }
.tri.up { width: 12px; transform: rotate(180deg); fill: #444; }
.tri.grey { fill: #444; }
.txe { width: 32px; height: 34px; }
.sq { width: 36px; height: 36px; }
.sendto { padding: 0 10px 20px 18px; font-size: 20px; line-height: 24px; }
.sends { display: flex; gap: 10px; padding-right: 10px; }

.lab { padding: 0 10px 0 8px; }
.sel {
  width: 100px;
  height: 40px;
  margin-right: 8px;
  padding-left: 8px;
  appearance: none;
  border: 2px solid #999;
  background: #f2f2f2 url("data:image/svg+xml,%3Csvg xmlns='http://www.w3.org/2000/svg' viewBox='0 0 14 8'%3E%3Cpath d='M0 0H14V1L8 7V8H6V7L0 1Z'/%3E%3C/svg%3E") right 3px center / 14px 8px no-repeat;
}
.sel.val { width: 96px; }
.row-time .sel { margin: 0; background-color: var(--bg); }
.row-time .sel.ps { width: 56px; background-color: #f2f2f2; }
.combo {
  display: flex;
  height: 40px;
  padding-right: 4px;
  border: solid;
  border-width: 4px 0 0 4px;
  border-color: var(--shade);
  background: #fff;
}
.combo input { flex: 1; width: 0; padding: 0 0 4px 4px; font-size: 25px; }
.combo button {
  display: flex;
  align-items: center;
  justify-content: center;
  width: 28px;
  height: 30px;
  margin-top: 3px;
  background: #d9d9d9;
  border: 2px solid;
  border-color: var(--bg) var(--shade) var(--shade) var(--bg);
}
.c-s { width: 142px; margin-right: 10px; }
.c-t { width: 210px; margin-right: 4px; }
.c-a { width: 182px; }
.c-r { width: 252px; margin-right: 8px; }
.flagx { width: 42px; height: 48px; }
.eq { padding: 0 8px; }
.clock { width: 60px; height: 48px; margin-right: 12px; }
.num { font-size: 21px; }
.row-time output { padding-right: 10px; }
.tm { padding-right: 14px; }
.ranges { width: 48px; height: 32px; margin-right: 4px; }
.zoomgrid {
  display: grid;
  grid-template-columns: repeat(4, 24px);
  gap: 6px 10px;
  padding: 0 10px 0 8px;
}
.zoomgrid button, .zoomgrid svg { width: 24px; height: 24px; }

/* work area */
.work { display: flex; flex: 1; padding-top: 4px; }
.side { display: flex; flex-direction: column; width: 66px; margin-left: 2px; background: linear-gradient(to right, var(--bg) 9px, #000 9px 12px, #a3a3a3 12px); }
.side-head {
  display: flex;
  align-items: center;
  justify-content: space-around;
  height: 38px;
  margin-bottom: 6px;
  background: #7f7f7f;
  box-shadow: 0 6px #a3a3a3;
}
.side-head svg { width: 16px; height: 16px; shape-rendering: auto; }
.side-head .ring { width: 24px; height: 24px; }
.tab {
  display: flex;
  align-items: center;
  width: 46px;
  height: 56px;
  margin: 0 0 4px 12px;
  padding: 0 0 4px 4px;
  background: var(--bg);
  border: 2px solid;
  border-color: #fff #000 #000 #fff;
  border-left-width: 0;
  border-radius: 0 6px 6px 0;
  box-shadow: inset -2px -2px #999;
}
.tab svg { width: 32px; height: 32px; }
.tab.on { width: 61px; height: 69px; margin: 0; padding-left: 16px; }
.tab.on svg { height: 36px; }
.left { display: flex; flex-direction: column; margin-left: 8px; }
.info {
  display: grid;
  grid-template-columns: 30px 1fr;
  grid-auto-rows: 32px;
  align-items: center;
  column-gap: 4px;
  height: 98px;
  padding-top: 17px;
  font-size: 20px;
  line-height: 24px;
}
.mini {
  width: 30px;
  height: 30px;
  border: 2px solid;
  border-color: #fff var(--shade) var(--shade) #fff;
}
.mini svg { width: 26px; height: 26px; }
.info-text { display: flex; align-items: center; gap: 4px; }
.info-text.r1 { padding-left: 72px; }
.dd { display: flex; align-items: center; gap: 4px; }
.panels { display: flex; flex: 1; gap: 12px; }
.panel { background: #000; color: #fff; }
.names { width: 350px; }
.values { width: 150px; }
.head {
  display: flex;
  justify-content: space-between;
  align-items: center;
  height: 40px;
  padding: 0 6px;
  background: #b3b3b3;
  border: 2px solid #999;
  color: #111;
}
.opts { display: flex; align-items: center; gap: 5px; }
.gear { width: 20px; height: 20px; }
.panel li { display: flex; height: 40px; }
.lit { background: var(--lit); }
.tree { font-size: 20px; line-height: 46px; }
.branch { width: 44px; height: 40px; }
.sig { width: 40px; height: 28px; margin: 8px 10px 0 0; }
.insert { position: relative; }
.insert::after {
  content: "";
  position: absolute;
  left: 28px;
  right: 0;
  bottom: 0;
  height: 10px;
  background: #f00;
  clip-path: polygon(0 100%, 0 60%, 5px 0, 7px 0, 12px 80%, 100% 80%, 100% 100%);
}
.vals { font: 20px/40px "Liberation Mono", monospace; white-space: pre; }
.vals li { padding-left: 6px; }

/* waveforms */
.wave {
  position: relative;
  display: flex;
  flex-direction: column;
  flex: 1;
  margin-left: 12px;
  background: #000;
  color: #fff;
}
.flagrow { display: flex; justify-content: flex-end; align-items: flex-end; height: 100px; padding-right: 2px; }
.tag {
  position: relative;
  z-index: 1;
  padding: 0 8px 0 4px;
  font-size: 25px;
  line-height: 28px;
  background: #f00;
  border: 2px solid;
  border-color: #ff8080 #a00000 #a00000 #ff8080;
}
.ruler { display: flex; height: 38px; padding-right: 2px; border-bottom: 2px solid #e8e8e8; }
.ruler i {
  flex: 1 1 0;
  width: 0;
  font-style: normal;
  font-size: 25px;
  line-height: 32px;
  white-space: nowrap;
  background: linear-gradient(#fff, #fff) left bottom / 2px 4px no-repeat;
}
.ruler .major { text-indent: 5px; background-size: 2px 100%; }
.trace { display: flex; height: 40px; padding: 4px 2px 4px 0; }
.v {
  --g: linear-gradient(var(--green), var(--green));
  flex: 1 1 0;
  min-width: 0;
  text-indent: 13px;
  font: 20px/31px "Liberation Mono", monospace;
  background:
    var(--g) center top / calc(100% - 8px) 2px,
    var(--g) center bottom / calc(100% - 8px) 2px,
    var(--g) left 3px top 2px / 2px 2px,
    var(--g) left 2px top 4px / 2px 8px,
    var(--g) left 0 top 12px / 1px 8px,
    var(--g) left 2px top 20px / 2px 8px,
    var(--g) left 3px top 28px / 2px 2px,
    var(--g) right 3px top 2px / 2px 2px,
    var(--g) right 2px top 4px / 2px 8px,
    var(--g) right 0 top 12px / 1px 8px,
    var(--g) right 2px top 20px / 2px 8px,
    var(--g) right 3px top 28px / 2px 2px;
  background-repeat: no-repeat;
}
.v.open {
  text-indent: 5px;
  background:
    var(--g) left top / calc(100% - 4px) 2px,
    var(--g) left bottom / calc(100% - 4px) 2px,
    var(--g) right 3px top 2px / 2px 2px,
    var(--g) right 2px top 4px / 2px 8px,
    var(--g) right 0 top 12px / 1px 8px,
    var(--g) right 2px top 20px / 2px 8px,
    var(--g) right 3px top 28px / 2px 2px;
  background-repeat: no-repeat;
}
.hi, .lo { flex: 1 1 0; }
.hi { border-top: 2px solid var(--green); }
.lo { border: 2px solid var(--green); border-top: 0; }
.start { border-left: 2px solid var(--green); }
.trace .n2 { flex-grow: 2; }
.trace .n3 { flex-grow: 3; }
.trace .n4 { flex-grow: 4; }
.trace .n12 { flex-grow: 12; }
.trace .n13 { flex-grow: 13; }
.trace .n16 { flex-grow: 16; }
.cursorline {
  position: absolute;
  top: 100px;
  right: 2px;
  bottom: 0;
  width: 2px;
  background: #f00;
}

.scroll { display: flex; width: 28px; padding-top: 138px; }
.scrollbar {
  display: flex;
  flex-direction: column;
  flex: 1;
  padding: 2px 2px 0 0;
  background: #c0c0c0;
  border: 2px solid var(--shade);
  border-width: 2px 0 0 4px;
}
.scrollbar svg { width: 22px; height: 24px; }
.thumb {
  flex: 1;
  background: var(--bg);
  border: solid;
  border-width: 4px 4px 0 4px;
  border-color: #fff var(--shade) #fff #fff;
}
```
